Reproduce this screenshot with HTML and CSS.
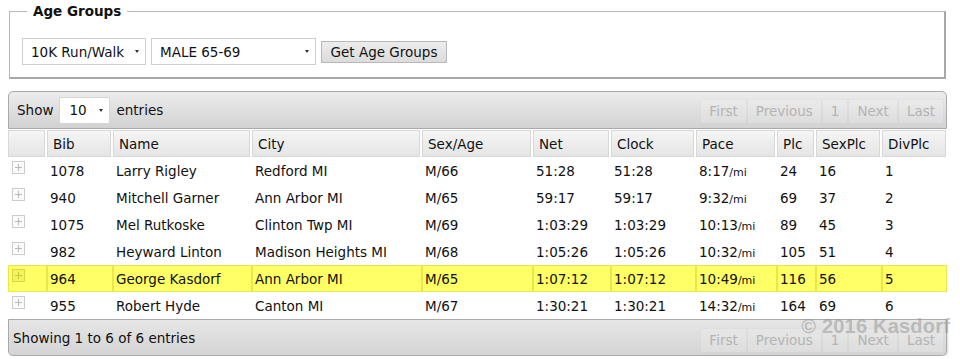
FILE: index.html
```html
<!DOCTYPE html>
<html lang="en">
<head>
  <meta charset="UTF-8">
  <title>Age Groups</title>
  <link rel="stylesheet" href="styles.css">
</head>
<body>

<fieldset class="age-groups">
  <legend>Age Groups</legend>
  <div class="age-form">
    <span class="select-wrap race"><select><option>10K Run/Walk</option></select></span>
    <span class="select-wrap group"><select><option>MALE 65-69</option></select></span>
    <button type="button" class="get-btn">Get Age Groups</button>
  </div>
</fieldset>

<div class="results">
  <div class="bar bar-top">
    <div class="length">
      Show
      <span class="select-wrap count"><select><option>10</option></select></span>
      entries
    </div>
    <div class="paging">
      <span>First</span><span>Previous</span><span>1</span><span>Next</span><span>Last</span>
    </div>
  </div>

  <table class="grid">
    <colgroup>
      <col style="width:39px"><col style="width:66px"><col style="width:139px"><col style="width:170px">
      <col style="width:111px"><col style="width:78px"><col style="width:85px"><col style="width:81px">
      <col style="width:39px"><col style="width:66px"><col style="width:65px">
    </colgroup>
    <thead>
      <tr>
        <th></th><th>Bib</th><th>Name</th><th>City</th><th>Sex/Age</th><th>Net</th>
        <th>Clock</th><th>Pace</th><th>Plc</th><th>SexPlc</th><th>DivPlc</th>
      </tr>
    </thead>
    <tbody>
      <tr>
        <td><span class="plus"></span></td><td>1078</td><td>Larry Rigley</td><td>Redford MI</td><td>M/66</td>
        <td>51:28</td><td>51:28</td><td>8:17<small>/mi</small></td><td>24</td><td>16</td><td>1</td>
      </tr>
      <tr>
        <td><span class="plus"></span></td><td>940</td><td>Mitchell Garner</td><td>Ann Arbor MI</td><td>M/65</td>
        <td>59:17</td><td>59:17</td><td>9:32<small>/mi</small></td><td>69</td><td>37</td><td>2</td>
      </tr>
      <tr>
        <td><span class="plus"></span></td><td>1075</td><td>Mel Rutkoske</td><td>Clinton Twp MI</td><td>M/69</td>
        <td>1:03:29</td><td>1:03:29</td><td>10:13<small>/mi</small></td><td>89</td><td>45</td><td>3</td>
      </tr>
      <tr>
        <td><span class="plus"></span></td><td>982</td><td>Heyward Linton</td><td>Madison Heights MI</td><td>M/68</td>
        <td>1:05:26</td><td>1:05:26</td><td>10:32<small>/mi</small></td><td>105</td><td>51</td><td>4</td>
      </tr>
      <tr class="mine">
        <td><span class="plus"></span></td><td>964</td><td>George Kasdorf</td><td>Ann Arbor MI</td><td>M/65</td>
        <td>1:07:12</td><td>1:07:12</td><td>10:49<small>/mi</small></td><td>116</td><td>56</td><td>5</td>
      </tr>
      <tr>
        <td><span class="plus"></span></td><td>955</td><td>Robert Hyde</td><td>Canton MI</td><td>M/67</td>
        <td>1:30:21</td><td>1:30:21</td><td>14:32<small>/mi</small></td><td>164</td><td>69</td><td>6</td>
      </tr>
    </tbody>
  </table>

  <div class="bar bar-bottom">
    <div class="info">Showing 1 to 6 of 6 entries</div>
    <div class="paging">
      <span>First</span><span>Previous</span><span>1</span><span>Next</span><span>Last</span>
    </div>
    <div class="watermark">&copy; 2016 Kasdorf</div>
  </div>
</div>

</body>
</html>
```

FILE: styles.css
```css
body {
  font-family: "DejaVu Sans", Verdana, sans-serif;
  font-size: 13.5px;
  color: #111;
  background: #fff;
  margin: 0 8px;
  overflow: hidden;
}

.age-groups {
  margin: 0 6px 0 1px;
  padding: 16px 12px 12px 12px;
  border: 2px solid #b4b4b4;
  border-width: 1px 2px 2px 1px;
  border-color: #b8b8b8 #a8a8a8 #a8a8a8 #b8b8b8;
}

.age-groups legend {
  font-weight: bold;
  font-size: 13.5px;
  line-height: 22px;
  padding: 0 6px;
  margin-left: 5px;
}

.age-form {
  display: flex;
  align-items: center;
  gap: 5px;
}

.select-wrap {
  position: relative;
  display: inline-block;
}

.select-wrap select {
  appearance: none;
  font: inherit;
  color: #111;
  background: #fff;
  border: 1px solid #cfcfcf;
  height: 27px;
  padding: 0 0 0 8px;
  margin: 0;
  outline: none;
}

.select-wrap::after {
  content: "";
  position: absolute;
  right: 7px;
  top: 12px;
  border-left: 2px solid transparent;
  border-right: 2px solid transparent;
  border-top: 3px solid #333;
}

.race select { width: 124px; }
.group select { width: 165px; }

.get-btn {
  font: inherit;
  color: #111;
  height: 22px;
  width: 126px;
  padding: 0;
  border: 1px solid #b8b8b8;
  background: linear-gradient(#ececec, #dcdcdc);
}

.results {
  margin-top: 12px;
  width: 939px;
  position: relative;
}

.bar {
  display: flex;
  align-items: center;
  justify-content: space-between;
  border: 1px solid #a9a9a9;
  background: linear-gradient(#ececec, #d2d2d2);
  padding: 0 2px 0 8px;
  position: relative;
}

.bar-top {
  height: 36px;
  border-radius: 5px 5px 0 0;
  padding-left: 8px;
}

.bar-bottom {
  height: 35px;
  border-radius: 0 0 5px 5px;
  padding-left: 4px;
  background: linear-gradient(#e6e6e6, #d4d4d4);
  box-shadow: 1px 1px 2px rgba(0, 0, 0, 0.15);
}

.length {
  display: flex;
  align-items: center;
  gap: 6px;
}

.count select {
  width: 51px;
  padding-left: 9px;
  border-color: #d6d6d6;
}

.paging {
  display: flex;
  color: #b4b4b4;
  align-self: flex-end;
  margin-bottom: 4px;
}

.paging span {
  height: 23px;
  line-height: 23px;
  padding: 0 8px;
  border: 1px solid rgba(0, 0, 0, 0.035);
  background: rgba(255, 255, 255, 0.18);
  border-radius: 2px;
}

.bar-bottom .paging {
  margin-bottom: 2px;
}

.watermark {
  position: absolute;
  right: -4px;
  top: -5px;
  font-family: "Liberation Sans", Arial, sans-serif;
  font-weight: bold;
  font-size: 20px;
  letter-spacing: 0.2px;
  white-space: nowrap;
  color: rgba(150, 150, 150, 0.55);
  pointer-events: none;
}

.grid {
  width: 939px;
  table-layout: fixed;
  border-collapse: separate;
  border-spacing: 0;
}

.grid th {
  height: 27px;
  padding: 0 0 0 6px;
  text-align: left;
  font-weight: normal;
  background: linear-gradient(#f6f6f6, #e4e4e4);
  box-shadow: inset 0 0 0 1px #d8d8d8;
  border-right: 2px solid #fff;
  border-top: 1px solid #fff;
}

.grid th:last-child {
  border-right: 1px solid #fff;
}

.grid td {
  height: 27px;
  padding: 0 0 0 3px;
  white-space: nowrap;
}

.grid td small {
  font-size: 11px;
}

.plus {
  display: block;
  position: relative;
  width: 11px;
  height: 11px;
  margin: -6px 0 0 1px;
  border: 1px solid #ccc;
  background: #fafafa;
}

.plus::before,
.plus::after {
  content: "";
  position: absolute;
  background: #b8b8b8;
}

.plus::before {
  left: 2px;
  right: 2px;
  top: 5px;
  height: 1px;
}

.plus::after {
  top: 2px;
  bottom: 2px;
  left: 5px;
  width: 1px;
}

.grid tr.mine td {
  background: #ffff66;
  box-shadow: inset 0 0 0 1px #e8e84a;
}

.grid tr.mine .plus {
  background: #f4f45a;
  border-color: #d8d84a;
}

.grid tr.mine .plus::before,
.grid tr.mine .plus::after {
  background: #c8c844;
}
```
